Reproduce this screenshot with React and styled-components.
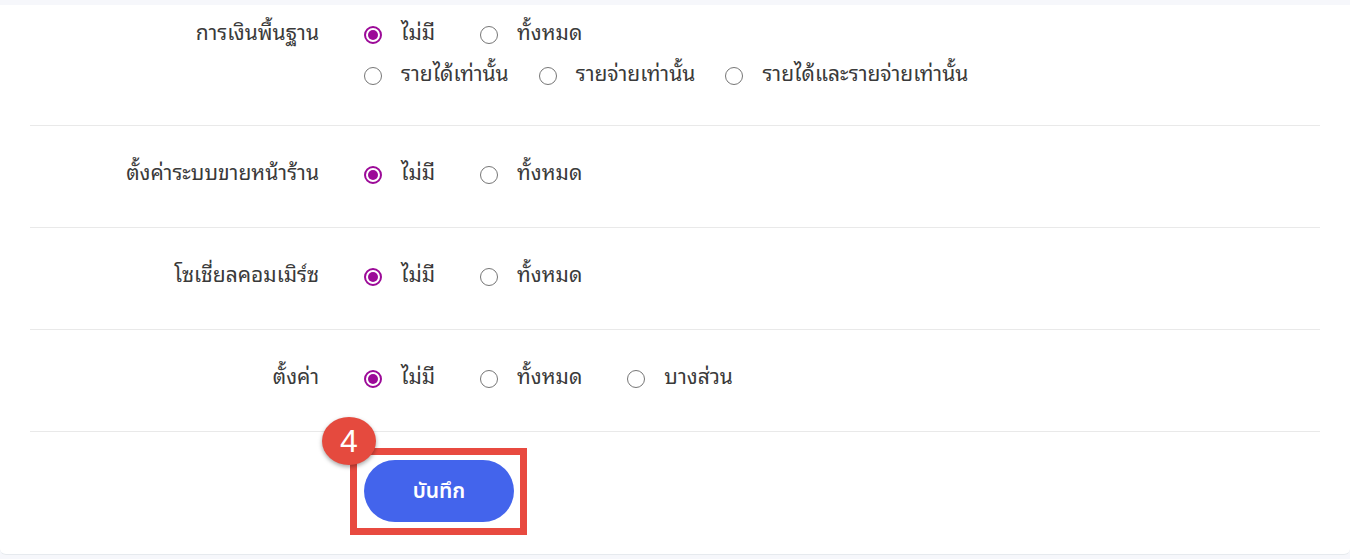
import React, { useState } from "react";
import styled, { createGlobalStyle } from "styled-components";

const thaiFont = `Tahoma, "Noto Sans Thai Looped", "Noto Looped Thai", Loma, Garuda, "Noto Sans", "Noto Sans Thai", sans-serif`;

const GlobalStyle = createGlobalStyle`
  html, body {
    margin: 0;
    padding: 0;
    background: #f6f7fb;
    font-family: ${thaiFont};
    color: #3a3a3a;
  }
`;

const Page = styled.div`
  width: 1350px;
  height: 559px;
  overflow: hidden;
  padding-top: 5px;
  box-sizing: border-box;
`;

const Card = styled.div`
  background: #ffffff;
  height: 550px;
  border-bottom: 1px solid #e6eaee;
  border-radius: 0 0 6px 6px;
  padding: 0 30px;
  box-sizing: border-box;
`;

const Row = styled.div`
  display: flex;
  align-items: ${(p) => (p.$top ? "flex-start" : "center")};
  padding: ${(p) => (p.$top ? "5px 0 33px" : "24px 0 36px")};
  border-bottom: 1px solid #e9e9e9;
`;

const Label = styled.div`
  width: 289px;
  text-align: right;
  font-size: 21px;
  line-height: 41px;
  flex-shrink: 0;
`;

const Options = styled.div`
  margin-left: 45px;
  display: flex;
  flex-direction: column;
`;

const Line = styled.div`
  display: flex;
  align-items: center;
  height: 41px;
  gap: ${(p) => (p.$tight ? "30px" : "45px")};
`;

const Option = styled.label`
  display: flex;
  align-items: center;
  gap: 19px;
  font-size: 21px;
  cursor: pointer;
`;

const Dot = styled.span`
  width: 18px;
  height: 18px;
  border-radius: 50%;
  box-sizing: border-box;
  border: ${(p) => (p.$on ? "2px solid #9c0a98" : "1.5px solid #767676")};
  display: flex;
  align-items: center;
  justify-content: center;
  margin-top: 8px;

  &::after {
    content: "";
    width: 10px;
    height: 10px;
    border-radius: 50%;
    background: ${(p) => (p.$on ? "#9c0a98" : "transparent")};
  }
`;

const Footer = styled.div`
  padding: 16px 0 0 320px;
`;

const Highlight = styled.div`
  position: relative;
  display: inline-flex;
  border: 7px solid #e84a40;
  padding: 5px 6px 6px 7px;
`;

const Badge = styled.div`
  position: absolute;
  left: -35px;
  top: -38px;
  width: 54px;
  height: 48px;
  border-radius: 50%;
  background: #e54a3e;
  color: #fff;
  font-family: "Liberation Sans", Arial, sans-serif;
  font-size: 32px;
  display: flex;
  align-items: center;
  justify-content: center;
  box-shadow: 0 2px 4px rgba(0, 0, 0, 0.35);
`;

const SaveButton = styled.button`
  width: 150px;
  height: 62px;
  border: none;
  border-radius: 31px;
  background: #4364ec;
  color: #fff;
  font-family: "Noto Sans", "Noto Sans Thai", sans-serif;
  font-size: 21px;
  font-weight: 600;
  cursor: pointer;
`;

const sections = [
  {
    label: "การเงินพื้นฐาน",
    lines: [
      ["ไม่มี", "ทั้งหมด"],
      ["รายได้เท่านั้น", "รายจ่ายเท่านั้น", "รายได้และรายจ่ายเท่านั้น"],
    ],
  },
  { label: "ตั้งค่าระบบขายหน้าร้าน", lines: [["ไม่มี", "ทั้งหมด"]] },
  { label: "โซเชี่ยลคอมเมิร์ซ", lines: [["ไม่มี", "ทั้งหมด"]] },
  { label: "ตั้งค่า", lines: [["ไม่มี", "ทั้งหมด", "บางส่วน"]] },
];

function Section({ label, lines, top }) {
  const [value, setValue] = useState("ไม่มี");
  return (
    <Row $top={top}>
      <Label>{label}</Label>
      <Options>
        {lines.map((line, i) => (
          <Line key={i} $tight={i > 0}>
            {line.map((opt) => (
              <Option key={opt} onClick={() => setValue(opt)}>
                <Dot $on={value === opt} />
                {opt}
              </Option>
            ))}
          </Line>
        ))}
      </Options>
    </Row>
  );
}

export default function App() {
  return (
    <>
      <GlobalStyle />
      <Page>
        <Card>
          {sections.map((s, i) => (
            <Section key={s.label} {...s} top={i === 0} />
          ))}
          <Footer>
            <Highlight>
              <Badge>4</Badge>
              <SaveButton>บันทึก</SaveButton>
            </Highlight>
          </Footer>
        </Card>
      </Page>
    </>
  );
}
